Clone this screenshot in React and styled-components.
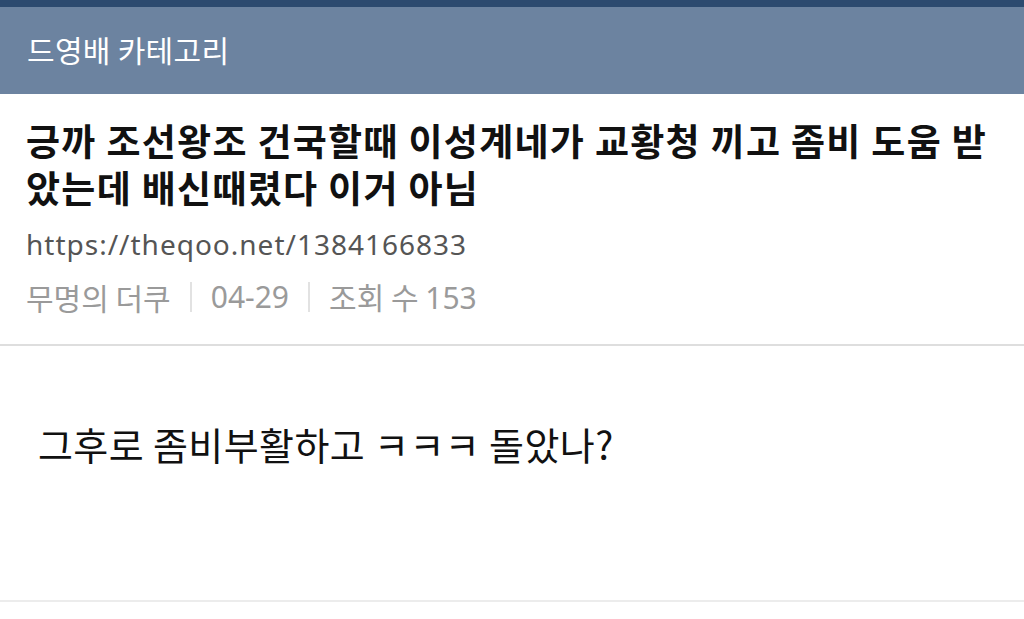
import React from "react";
import styled, { createGlobalStyle } from "styled-components";

const Global = createGlobalStyle`
  html, body { margin: 0; padding: 0; background: #fff; }
  body { font-family: "Noto Sans CJK KR", "Noto Sans", sans-serif; }
`;

const Page = styled.div`
  width: 1024px;
  min-height: 619px;
  background: #fff;
  border-top: 7px solid #2c4a6f;
`;

const CategoryBar = styled.header`
  height: 87px;
  background: #6c83a0;
  display: flex;
  align-items: center;
  padding: 0 27px 3px;
  box-sizing: border-box;
`;

const CategoryName = styled.h1`
  margin: 0;
  font-size: 30px;
  font-weight: 400;
  color: #fff;
  letter-spacing: 0.3px;
`;

const PostHead = styled.section`
  padding: 23px 26px 25px;
  border-bottom: 2px solid #dedede;
`;

const Title = styled.h2`
  margin: 0;
  font-size: 37px;
  line-height: 47px;
  font-weight: 700;
  color: #111;
  letter-spacing: 1.3px;
`;

const Link = styled.div`
  margin-top: 12px;
  font-family: "Noto Sans", sans-serif;
  font-size: 28px;
  line-height: 42px;
  letter-spacing: 1px;
  color: #555;
`;

const Meta = styled.div`
  display: flex;
  align-items: center;
  margin-top: 10px;
  font-size: 30px;
  line-height: 42px;
  color: #9a9a9a;
`;

const MetaItem = styled.span`
  font-family: ${(p) => (p.$num ? '"Noto Sans", sans-serif' : 'inherit')};
`;

const Sep = styled.span`
  width: 2px;
  height: 30px;
  background: #e2e2e2;
  margin: 0 19px;
`;

const Body = styled.article`
  height: 256px;
  display: flex;
  align-items: center;
  padding: 0 38px 60px;
  box-sizing: border-box;
  border-bottom: 2px solid #ececec;
`;

const Text = styled.p`
  margin: 0;
  font-size: 38px;
  font-weight: 400;
  color: #111;
  letter-spacing: 0.4px;
`;

export default function App() {
  return (
    <>
      <Global />
      <Page>
        <CategoryBar>
          <CategoryName>드영배 카테고리</CategoryName>
        </CategoryBar>
        <PostHead>
          <Title>
            긍까 조선왕조 건국할때 이성계네가 교황청 끼고 좀비 도움 받
            <br />
            았는데 배신때렸다 이거 아님
          </Title>
          <Link>https://theqoo.net/1384166833</Link>
          <Meta>
            <MetaItem>무명의 더쿠</MetaItem>
            <Sep />
            <MetaItem $num>04-29</MetaItem>
            <Sep />
            <MetaItem>조회 수 <MetaItem $num>153</MetaItem></MetaItem>
          </Meta>
        </PostHead>
        <Body>
          <Text>그후로 좀비부활하고 ㅋㅋㅋ 돌았나?</Text>
        </Body>
      </Page>
    </>
  );
}
